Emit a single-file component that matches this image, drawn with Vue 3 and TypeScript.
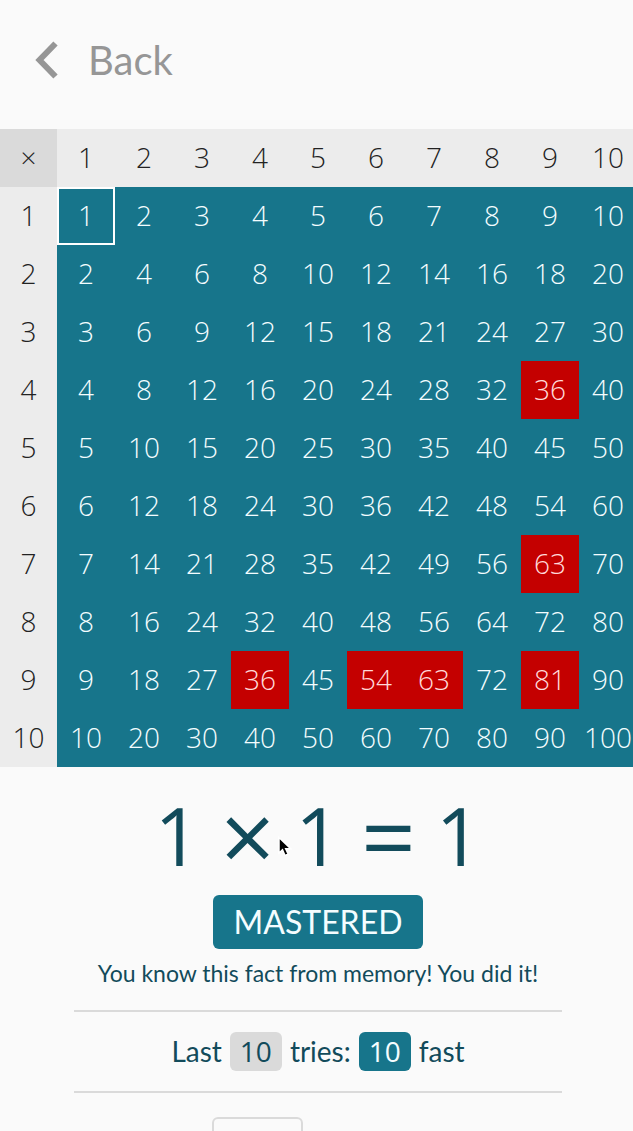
<script setup lang="ts">
import { computed, ref } from 'vue'

const numbers: number[] = Array.from({ length: 10 }, (_, i) => i + 1)
const missed = new Set<string>(['4-9', '7-9', '9-4', '9-6', '9-7', '9-9'])

const row = ref(1)
const col = ref(1)
const next = ref('')
const product = computed<number>(() => row.value * col.value)

function isMissed(r: number, c: number): boolean {
  return missed.has(`${r}-${c}`)
}

function select(r: number, c: number): void {
  row.value = r
  col.value = c
}
</script>

<template>
  <div class="page">
    <header class="top">
      <button class="back" type="button">
        <svg width="26" height="40" viewBox="0 0 26 40" aria-hidden="true">
          <path d="M21.500 3.500 5.500 20l16 16.500" fill="none" stroke="#969696" stroke-width="6" />
        </svg>
        <span>Back</span>
      </button>
    </header>

    <table class="grid">
      <thead>
        <tr>
          <th class="corner" scope="col">×</th>
          <th v-for="c in numbers" :key="c" scope="col">{{ c }}</th>
        </tr>
      </thead>
      <tbody>
        <tr v-for="r in numbers" :key="r">
          <th scope="row">{{ r }}</th>
          <td v-for="c in numbers" :key="c">
            <button
              type="button"
              class="fact"
              :class="{ missed: isMissed(r, c), selected: r === row && c === col }"
              @click="select(r, c)"
            >{{ r * c }}</button>
          </td>
        </tr>
      </tbody>
    </table>

    <main class="detail">
      <div class="equation">
        <span>{{ row }}</span>
        <span class="operator">×</span>
        <span>{{ col }}</span>
        <span class="operator">=</span>
        <span>{{ product }}</span>
        <svg class="pointer" width="16" height="22" viewBox="0 0 16 22" aria-hidden="true">
          <path d="M2 1.500v15.500l3.500-3.200 2.500 5.700 3.200-1.400-2.500-5.400h5z" fill="#000" stroke="#fff" stroke-width="1.500" />
        </svg>
      </div>
      <div class="status">MASTERED</div>
      <p class="message">You know this fact from memory! You did it!</p>
      <div class="tries">
        <span>Last</span>
        <span class="pill">10</span>
        <span>tries:</span>
        <span class="pill fast">10</span>
        <span>fast</span>
      </div>
      <div class="entry">
        <input v-model="next" type="text" aria-label="Answer" />
      </div>
    </main>
  </div>
</template>

<style>
body {
  background: #fafafa;
}
</style>

<style scoped>
.page {
  height: 100vh;
  overflow: hidden;
  background: #fafafa;
  color: #124b5b;
  font-family: Lato, "Open Sans", sans-serif;
}
.top {
  display: flex;
  align-items: center;
  height: 129px;
  padding: 0 34px;
  box-sizing: border-box;
}
.back {
  display: flex;
  align-items: center;
  gap: 28px;
  margin-bottom: 10px;
  padding: 0;
  border: 0;
  background: none;
  color: #969696;
  font: 400 40px/48px Lato, sans-serif;
}
.grid {
  width: 100%;
  min-width: 636px;
  table-layout: fixed;
  border-collapse: collapse;
  font: 350 28px/56px "Open Sans", sans-serif;
}
th,
td {
  width: 58px;
  height: 58px;
  padding: 0;
  box-sizing: border-box;
  text-align: center;
}
th {
  padding-bottom: 2px;
  background: #ececec;
  color: #222;
  font-weight: 350;
}
th:first-child {
  width: 57px;
}
.corner {
  background: #dadada;
}
.fact {
  display: block;
  width: 100%;
  height: 58px;
  padding: 0 0 2px;
  box-sizing: border-box;
  border: 0;
  border-radius: 0;
  background: #17758b;
  color: #f4fdff;
  font: inherit;
  text-align: center;
}
.missed {
  background: #c40000;
  color: #ffdada;
}
.selected {
  box-shadow: inset 0 0 0 2px #fff;
}
.detail {
  display: flex;
  flex-direction: column;
  align-items: center;
  min-width: 636px;
  padding: 24px 74px 0;
  box-sizing: border-box;
}
.equation {
  position: relative;
  display: flex;
  gap: 20px;
  font: 400 80px/88px "Open Sans", sans-serif;
}
.operator {
  font-size: 96px;
}
.pointer {
  position: absolute;
  left: 123px;
  top: 45px;
}
.status {
  margin-top: 16px;
  padding: 0 21px;
  border-radius: 6px;
  background: #17758b;
  color: #f4fdff;
  font-size: 32px;
  line-height: 54px;
}
.message {
  margin: 8px 0 20px;
  font-size: 23px;
  line-height: 33px;
}
.tries {
  display: flex;
  align-items: center;
  justify-content: center;
  align-self: stretch;
  gap: 8px;
  padding: 20px 0;
  border: solid #dadada;
  border-width: 2px 0;
  font-size: 28px;
  line-height: 39px;
}
.pill {
  padding: 0 10px;
  border-radius: 6px;
  background: #dadada;
  font-family: "Open Sans", sans-serif;
}
.fast {
  background: #17758b;
  color: #f4fdff;
}
.entry {
  align-self: stretch;
  padding: 24px 138px;
}
.entry input {
  width: 91px;
  height: 44px;
  box-sizing: border-box;
  border: 2px solid #dadada;
  border-radius: 6px;
  background: #fafafa;
  font: 400 28px/40px "Open Sans", sans-serif;
}
</style>
